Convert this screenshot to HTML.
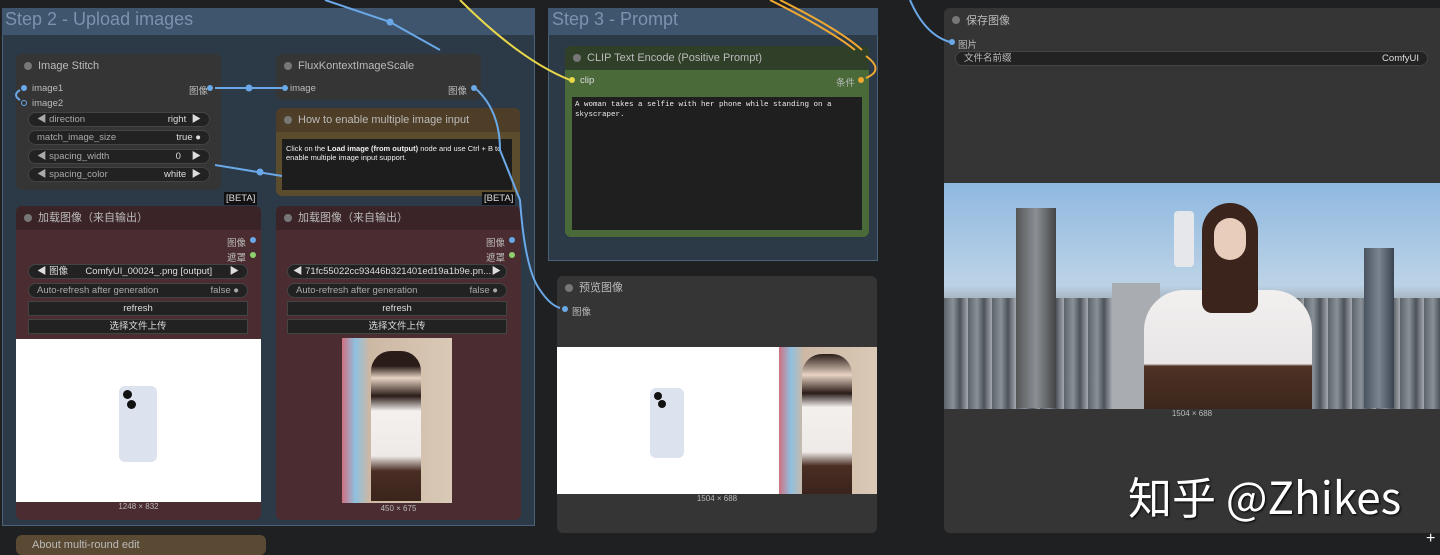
<!DOCTYPE html>
<html><head><meta charset="utf-8"><style>
*{margin:0;padding:0;box-sizing:border-box}
body{width:1440px;height:551px;overflow:hidden;background:#1f2022;font-family:"Liberation Sans","Noto Sans CJK SC",sans-serif;font-size:10px;color:#ccc;position:relative}
.a{position:absolute}
.node{position:absolute;background:#353535;border-radius:6px;overflow:hidden}
.hd{height:24px;background:#2a2a2a;color:#bbb;font-size:11px;line-height:24px;padding-left:22px;position:relative}
.hd:before{content:"";position:absolute;left:8px;top:8px;width:8px;height:8px;border-radius:50%;background:#777}
.w{position:absolute;height:15px;border-radius:8px;background:#222;border:1px solid #444;color:#aaa;font-size:9.5px;line-height:13px;padding:0 8px;display:flex;white-space:nowrap;overflow:hidden}
.w .s{flex:1}
.w .v{color:#ddd}
.btn{position:absolute;height:15px;background:#222;border:1px solid #444;color:#ddd;font-size:9.5px;line-height:13px;text-align:center}
.dot{position:absolute;width:6px;height:6px;border-radius:50%}
.lab{position:absolute;font-size:9.5px;color:#bbb}
</style></head><body>
<div class="a" style="left:2px;top:8px;width:533px;height:518px;background:#2c3946;border:1px solid #4a6177"></div>
<div class="a" style="left:2px;top:8px;width:533px;height:27px;background:#3e556d"></div>
<div class="a" style="left:5px;top:9px;font-size:18px;color:#7b93ae">Step 2 - Upload images</div>
<div class="a" style="left:548px;top:8px;width:330px;height:253px;background:#2c3946;border:1px solid #4a6177"></div>
<div class="a" style="left:548px;top:8px;width:330px;height:27px;background:#3e556d"></div>
<div class="a" style="left:552px;top:9px;font-size:18px;color:#7b93ae">Step 3 - Prompt</div>

<div class="node" style="left:16px;top:54px;width:205px;height:136px">
<div class="hd" style="background:#353535">Image Stitch</div></div>
<div class="dot" style="left:21px;top:85px;background:#6aa8e8"></div><div class="lab" style="left:32px;top:83px">image1</div>
<div class="dot" style="left:21px;top:100px;border:1.5px solid #6aa8e8"></div><div class="lab" style="left:32px;top:98px">image2</div>
<div class="lab" style="left:189px;top:83px">图像</div><div class="dot" style="left:207px;top:85px;background:#6aa8e8"></div>
<div class="w" style="left:28px;top:112px;width:182px"><span class="s">◀ direction</span><span class="v">right &nbsp;▶</span></div>
<div class="w" style="left:28px;top:130px;width:182px"><span class="s">match_image_size</span><span class="v">true ●</span></div>
<div class="w" style="left:28px;top:149px;width:182px"><span class="s">◀ spacing_width</span><span class="v">0 &nbsp;&nbsp;&nbsp;▶</span></div>
<div class="w" style="left:28px;top:167px;width:182px"><span class="s">◀ spacing_color</span><span class="v">white &nbsp;▶</span></div>

<div class="node" style="left:276px;top:54px;width:205px;height:46px"><div class="hd" style="background:#353535">FluxKontextImageScale</div></div>
<div class="dot" style="left:282px;top:85px;background:#6aa8e8"></div><div class="lab" style="left:290px;top:83px">image</div>
<div class="lab" style="left:448px;top:83px">图像</div><div class="dot" style="left:471px;top:85px;background:#6aa8e8"></div>

<div class="node" style="left:276px;top:108px;width:244px;height:88px;background:#5b4c2e"><div class="hd" style="background:#4e3e27">How to enable multiple image input</div>
<div class="a" style="left:6px;top:31px;width:230px;height:51px;background:#1d1d1d;color:#eee;font-size:7.5px;padding:5px 4px;line-height:9px">Click on the <b>Load image (from output)</b> node and use Ctrl + B to enable multiple image input support.</div></div>

<div class="a" style="left:224px;top:192px;background:#111;color:#ddd;font-size:9.5px;padding:1px 2px">[BETA]</div>
<div class="a" style="left:482px;top:192px;background:#111;color:#ddd;font-size:9.5px;padding:1px 2px">[BETA]</div>

<div class="node" style="left:16px;top:206px;width:245px;height:314px;background:#4b2c31"><div class="hd" style="background:#3a2427">加载图像（来自输出）</div>
<div class="a" style="left:0;top:133px;width:245px;height:163px;background:#fff"></div>
<div class="a" style="left:103px;top:180px;width:38px;height:76px;background:#dde2ef;border-radius:6px"></div>
<div class="a" style="left:107px;top:184px;width:9px;height:9px;border-radius:50%;background:#111"></div>
<div class="a" style="left:111px;top:194px;width:9px;height:9px;border-radius:50%;background:#111"></div>
<div class="a" style="left:0;top:296px;width:245px;text-align:center;font-size:8px;color:#bbb">1248 × 832</div></div>
<div class="lab" style="left:227px;top:235px">图像</div><div class="dot" style="left:250px;top:237px;background:#6aa8e8"></div>
<div class="lab" style="left:227px;top:250px">遮罩</div><div class="dot" style="left:250px;top:252px;background:#8ecf6e"></div>
<div class="w" style="left:28px;top:264px;width:220px;color:#ddd"><span>◀ 图像</span><span class="s" style="text-align:center">ComfyUI_00024_.png [output]</span><span>▶</span></div>
<div class="w" style="left:28px;top:283px;width:220px"><span class="s">Auto-refresh after generation</span><span>false ●</span></div>
<div class="btn" style="left:28px;top:301px;width:220px">refresh</div>
<div class="btn" style="left:28px;top:319px;width:220px">选择文件上传</div>

<div class="node" style="left:276px;top:206px;width:245px;height:314px;background:#4b2c31"><div class="hd" style="background:#3a2427">加载图像（来自输出）</div>
<div class="a" style="left:66px;top:132px;width:110px;height:165px;background:linear-gradient(90deg,#d07080 0,#8fc0e0 12%,#cdb8a4 25%,#d9c9b6 100%)"></div>
<div class="a" style="left:95px;top:145px;width:50px;height:150px;background:linear-gradient(180deg,#2a1c18 0,#2a1c18 10%,#e8d3c4 18%,#2a1c18 30%,#f3f0ee 40%,#eeeae8 70%,#4a2e24 80%,#3a241c 100%);border-radius:20px 20px 0 0"></div>
<div class="a" style="left:0;top:298px;width:245px;text-align:center;font-size:8px;color:#bbb">450 × 675</div></div>
<div class="lab" style="left:486px;top:235px">图像</div><div class="dot" style="left:509px;top:237px;background:#6aa8e8"></div>
<div class="lab" style="left:486px;top:250px">遮罩</div><div class="dot" style="left:509px;top:252px;background:#8ecf6e"></div>
<div class="w" style="left:287px;top:264px;width:220px;color:#ddd;padding:0 5px"><span class="s">◀ 71fc55022cc93446b321401ed19a1b9e.pn...</span><span>▶</span></div>
<div class="w" style="left:287px;top:283px;width:220px"><span class="s">Auto-refresh after generation</span><span>false ●</span></div>
<div class="btn" style="left:287px;top:301px;width:220px">refresh</div>
<div class="btn" style="left:287px;top:319px;width:220px">选择文件上传</div>

<div class="node" style="left:565px;top:46px;width:304px;height:191px;background:#4a6a3a"><div class="hd" style="background:#2f3f28">CLIP Text Encode (Positive Prompt)</div>
<div class="a" style="left:7px;top:51px;width:290px;height:133px;background:#1f1f1f;color:#eee;font-family:'Liberation Mono',monospace;font-size:7.5px;padding:3px 3px;line-height:10px">A woman takes a selfie with her phone while standing on a skyscraper.</div></div>
<div class="dot" style="left:569px;top:77px;background:#e8d84a"></div><div class="lab" style="left:580px;top:75px;color:#ddd">clip</div>
<div class="lab" style="left:836px;top:75px">条件</div><div class="dot" style="left:858px;top:77px;background:#f0a830"></div>

<div class="node" style="left:557px;top:276px;width:320px;height:257px"><div class="hd" style="background:#353535">预览图像</div>
<div class="a" style="left:0;top:71px;width:222px;height:147px;background:#fff"></div>
<div class="a" style="left:93px;top:112px;width:34px;height:70px;background:#dde2ef;border-radius:6px"></div>
<div class="a" style="left:97px;top:116px;width:8px;height:8px;border-radius:50%;background:#111"></div>
<div class="a" style="left:101px;top:124px;width:8px;height:8px;border-radius:50%;background:#111"></div>
<div class="a" style="left:222px;top:71px;width:98px;height:147px;background:linear-gradient(90deg,#d07080 0,#8fc0e0 12%,#cdb8a4 25%,#d9c9b6 100%)"></div>
<div class="a" style="left:245px;top:78px;width:50px;height:140px;background:linear-gradient(180deg,#2a1c18 0,#e8d3c4 15%,#2a1c18 28%,#f3f0ee 38%,#eeeae8 70%,#4a2e24 80%,#3a241c 100%);border-radius:20px 20px 0 0"></div>
<div class="a" style="left:0;top:218px;width:320px;text-align:center;font-size:8px;color:#bbb">1504 × 688</div></div>
<div class="dot" style="left:562px;top:306px;background:#6aa8e8"></div><div class="lab" style="left:572px;top:304px">图像</div>

<div class="node" style="left:944px;top:8px;width:496px;height:525px;border-radius:6px 0 0 6px"><div class="hd" style="background:#353535;height:26px;line-height:26px">保存图像</div>
<div class="a" style="left:0;top:175px;width:496px;height:226px;background:linear-gradient(180deg,#8fb8e0 0,#bcd3e6 45%,#9aa3ab 55%,#6e747a 100%)"></div>
<div class="a" style="left:0;top:290px;width:496px;height:111px;background:repeating-linear-gradient(90deg,#5c636b 0,#8a9199 9px,#4c535a 16px,#a4a9ae 24px)"></div>
<div class="a" style="left:72px;top:200px;width:40px;height:200px;background:linear-gradient(90deg,#555,#8b9096,#444)"></div>
<div class="a" style="left:168px;top:275px;width:48px;height:126px;background:#a9acb0"></div>
<div class="a" style="left:420px;top:240px;width:30px;height:160px;background:linear-gradient(90deg,#4a5460,#7a8490,#3a4450)"></div>
<div class="a" style="left:200px;top:282px;width:168px;height:119px;background:linear-gradient(180deg,#f2f0ef 0,#e8e6e6 62%,#4e3225 64%,#3c261c 100%);border-radius:40px 40px 0 0"></div>
<div class="a" style="left:258px;top:195px;width:56px;height:110px;background:#3a241c;border-radius:28px 28px 10px 10px"></div>
<div class="a" style="left:270px;top:210px;width:32px;height:42px;background:#e9cdbc;border-radius:16px"></div>
<div class="a" style="left:230px;top:203px;width:20px;height:56px;background:#e6e7ea;border-radius:4px"></div>
<div class="a" style="left:0;top:401px;width:496px;text-align:center;font-size:8px;color:#bbb">1504 × 688</div></div>
<div class="dot" style="left:949px;top:39px;background:#6aa8e8"></div><div class="lab" style="left:958px;top:37px">图片</div>
<div class="w" style="left:955px;top:51px;width:473px;color:#bbb"><span class="s">文件名前缀</span><span class="v">ComfyUI</span></div>
<div class="a" style="left:1128px;top:463px;font-size:44px;color:#fff;font-family:'Noto Sans CJK SC','DejaVu Sans',sans-serif;text-shadow:1px 1px 2px #000">知乎 @Zhikes</div>
<div class="a" style="left:1426px;top:530px;color:#fff;font-size:16px">+</div>

<div class="a" style="left:16px;top:535px;width:250px;height:20px;background:#5b4a33;border-radius:6px;color:#bbb;font-size:11px;padding:4px 0 0 16px">About multi-round edit</div>

<svg class="a" style="left:0;top:0" width="1440" height="551">
<g fill="none" stroke-width="2">
<path d="M215 88 L282 88" stroke="#6aa8e8"/>
<path d="M325 0 L390 22 L440 50" stroke="#6aa8e8"/>
<path d="M460 0 Q520 60 570 80" stroke="#e8d84a"/>
<path d="M770 0 Q830 30 855 50 M780 0 Q840 30 862 50" stroke="#f0a830"/>
<path d="M866 56 Q885 70 866 78" stroke="#f0a830"/>
<path d="M215 165 L282 176" stroke="#6aa8e8"/>
<path d="M475 88 Q500 110 500 150 L520 200 Q525 270 540 290 Q550 305 560 308" stroke="#6aa8e8"/>
<path d="M910 0 Q925 35 950 42" stroke="#6aa8e8"/>
<path d="M20 90 Q12 95 20 100" stroke="#6aa8e8"/>
</g>
<circle cx="249" cy="88" r="3.5" fill="#6aa8e8"/><circle cx="390" cy="22" r="3.5" fill="#6aa8e8"/><circle cx="260" cy="172" r="3.5" fill="#6aa8e8"/>
</svg>
</body></html>
